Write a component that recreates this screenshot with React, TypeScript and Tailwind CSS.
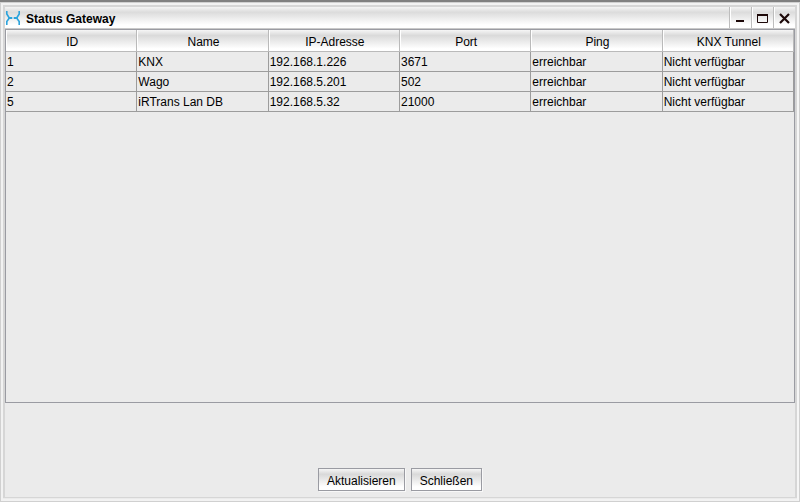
import type { ReactNode } from "react";

type Gateway = {
  id: number;
  name: string;
  ip: string;
  port: number;
  ping: string;
  tunnel: string;
};

const columns = ["ID", "Name", "IP-Adresse", "Port", "Ping", "KNX Tunnel"];

const gateways: Gateway[] = [
  { id: 1, name: "KNX", ip: "192.168.1.226", port: 3671, ping: "erreichbar", tunnel: "Nicht verfügbar" },
  { id: 2, name: "Wago", ip: "192.168.5.201", port: 502, ping: "erreichbar", tunnel: "Nicht verfügbar" },
  { id: 5, name: "iRTrans Lan DB", ip: "192.168.5.32", port: 21000, ping: "erreichbar", tunnel: "Nicht verfügbar" },
];

function Logo() {
  return (
    <svg className="h-4 w-4" viewBox="0 0 16 16" fill="none" stroke="#2ba3dc" aria-hidden="true">
      <path d="M1.800 1v3L4 7.500v1L1.800 11.500V15" strokeWidth="1.600" />
      <path d="M14.200 1v3L12 7.500v1l2.200 3V15" strokeWidth="1.600" />
      <path d="M3.500 8h3.800M8.700 8h3.800" strokeWidth="2" />
    </svg>
  );
}

function TitleButton({ label, children }: { label: string; children: ReactNode }) {
  return (
    <button
      type="button"
      aria-label={label}
      className="flex w-[22px] items-center justify-center border-l border-[#bdbdbd] shadow-[inset_1px_0_0_#ffffff]"
    >
      <svg className="h-[13px] w-[13px]" viewBox="0 0 13 13" fill="none" stroke="#1c0808" aria-hidden="true">
        {children}
      </svg>
    </button>
  );
}

function PushButton({ children }: { children: ReactNode }) {
  return (
    <button
      type="button"
      className="h-[23px] border border-[#9a9ba2] bg-linear-to-b from-[#f6f6f6] via-[#d9d9d9] via-25% to-white to-85% px-2 pt-0.5 shadow-[1px_1px_0_#f8f8f8]"
    >
      {children}
    </button>
  );
}

export default function App() {
  return (
    <div className="flex min-h-screen flex-col border-t-2 border-[#808080] bg-[#e0e0e0] font-['Liberation_Sans',Arial,sans-serif] text-[12px] leading-4 text-black">
      <div className="flex flex-1 flex-col border border-[#d0d0d0] bg-[#ebebeb]">
        <div className="flex flex-1 flex-col border-2 border-[#f2f2f2] border-r-[#f6f6f6] bg-[#ebebeb] pb-px">
          <main className="flex flex-1 flex-col border-x-2 border-t-2 border-b border-[#d6d6d6]">
            <header className="flex h-[22px] items-stretch border-b border-[#c9c9c9] bg-linear-to-b from-[#f4f4f4] via-[#dcdcdc] via-25% to-white to-85%">
              <div className="flex flex-1 items-center gap-[5px]">
                <Logo />
                <h1 className="pt-0.5 font-bold">Status Gateway</h1>
              </div>
              <TitleButton label="Minimieren">
                <path d="M2 10h8" strokeWidth="2" />
              </TitleButton>
              <TitleButton label="Maximieren">
                <path d="M1 4h11" strokeWidth="2" />
                <path d="M1.500 4v7.500h10V4" />
              </TitleButton>
              <TitleButton label="Fenster schließen">
                <path d="M2 3l9 9M11 3l-9 9" strokeWidth="2.200" />
              </TitleButton>
            </header>

            <section className="flex-1 border border-[#9a9ba2]">
              <table className="w-full table-fixed border-separate border-spacing-0">
                <thead>
                  <tr className="h-[22px] bg-linear-to-b from-[#f6f6f6] via-[#dadada] via-25% to-white to-85%">
                    {columns.map((column) => (
                      <th
                        key={column}
                        scope="col"
                        className="border-r border-b border-[#bababa] p-0 pt-0.5 pl-0.5 text-center font-normal shadow-[inset_1px_0_0_#ffffff]"
                      >
                        {column}
                      </th>
                    ))}
                  </tr>
                </thead>
                <tbody>
                  {gateways.map((gateway) => (
                    <tr key={gateway.id} className="h-5 *:border-r *:border-b *:border-[#9c9c9c] *:p-0 *:pl-px">
                      <td>{gateway.id}</td>
                      <td>{gateway.name}</td>
                      <td>{gateway.ip}</td>
                      <td>{gateway.port}</td>
                      <td>{gateway.ping}</td>
                      <td>{gateway.tunnel}</td>
                    </tr>
                  ))}
                </tbody>
              </table>
            </section>

            <footer className="flex h-[94px] items-end justify-center gap-1.5 pb-1.5">
              <PushButton>Aktualisieren</PushButton>
              <PushButton>Schließen</PushButton>
            </footer>
          </main>
        </div>
      </div>
    </div>
  );
}
